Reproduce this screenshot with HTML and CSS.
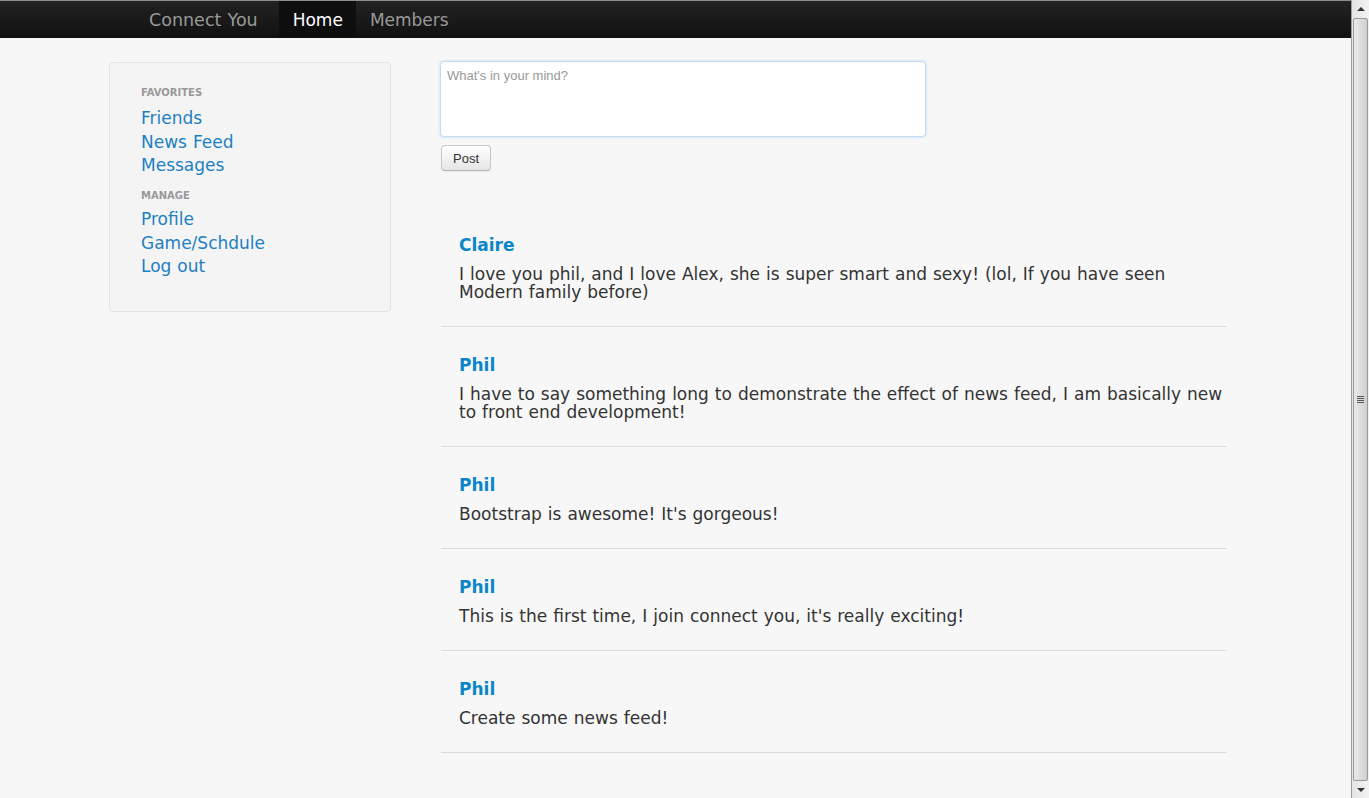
FILE: index.html
```html
<!DOCTYPE html>
<html lang="en">
<head>
<meta charset="utf-8">
<title>Connect You</title>
<link rel="stylesheet" href="styles.css">
</head>
<body>
<div class="window">
  <div class="viewport">
    <nav class="navbar">
      <a class="brand" href="#">Connect You</a>
      <a class="nav-item active" href="#">Home</a>
      <a class="nav-item" href="#">Members</a>
    </nav>
    <div class="container">
      <aside class="sidebar">
        <div class="nav-header">Favorites</div>
        <a class="side-link" href="#">Friends</a>
        <a class="side-link" href="#">News Feed</a>
        <a class="side-link" href="#">Messages</a>
        <div class="nav-header second">Manage</div>
        <a class="side-link" href="#">Profile</a>
        <a class="side-link" href="#">Game/Schdule</a>
        <a class="side-link" href="#">Log out</a>
      </aside>
      <main class="content">
        <textarea class="composer" placeholder="What's in your mind?"></textarea>
        <button class="btn">Post</button>
        <div class="feed">
          <div class="post">
            <div class="name">Claire</div>
            <p class="text">I love you phil, and I love Alex, she is super smart and sexy! (lol, If you have seen Modern family before)</p>
          </div>
          <div class="post">
            <div class="name">Phil</div>
            <p class="text">I have to say something long to demonstrate the effect of news feed, I am basically new to front end development!</p>
          </div>
          <div class="post">
            <div class="name">Phil</div>
            <p class="text">Bootstrap is awesome! It's gorgeous!</p>
          </div>
          <div class="post">
            <div class="name">Phil</div>
            <p class="text">This is the first time, I join connect you, it's really exciting!</p>
          </div>
          <div class="post">
            <div class="name">Phil</div>
            <p class="text">Create some news feed!</p>
          </div>
        </div>
      </main>
    </div>
  </div>
  <div class="scrollbar">
    <div class="sb-arrow up"></div>
    <div class="sb-track">
      <div class="sb-thumb"><div class="grip"></div></div>
    </div>
    <div class="sb-arrow down"></div>
  </div>
</div>
</body>
</html>
```
FILE: styles.css
```css
html, body {
  margin: 0;
  padding: 0;
  height: 100%;
  overflow: hidden;
}
body {
  background: #f7f7f7;
  font-family: "DejaVu Sans", Verdana, sans-serif;
  color: #333;
}
a { text-decoration: none; }

.window {
  display: flex;
  height: 798px;
}
.viewport {
  flex: 1;
  min-width: 0;
  overflow: hidden;
  background: #f7f7f7;
}

/* navbar */
.navbar {
  display: flex;
  height: 37px;
  border-top: 1px solid #8e8e8e;
  background: linear-gradient(to bottom, #222 0%, #111 100%);
  padding-left: 149px;
}
.brand {
  font-size: 17.5px;
  line-height: 35px;
  padding-top: 2px;
  color: #999;
  margin-right: 21px;
  word-spacing: 0.6px;
}
.nav-item {
  font-size: 17px;
  line-height: 35px;
  padding: 2px 13px 0 14px;
  color: #999;
}
.nav-item.active {
  color: #fff;
  background: #0e0e0e;
}

/* layout */
.container {
  display: flex;
  align-items: flex-start;
  padding: 23px 0 0 109px;
}

/* sidebar */
.sidebar {
  box-sizing: border-box;
  width: 282px;
  height: 250px;
  margin-top: 1px;
  background: #f4f4f4;
  border: 1px solid #e3e3e3;
  border-radius: 4px;
  padding: 20px 0 0 31px;
  display: flex;
  flex-direction: column;
  align-items: flex-start;
}
.nav-header {
  font-size: 10px;
  font-weight: bold;
  line-height: 20px;
  text-transform: uppercase;
  color: #999;
  margin-bottom: 4px;
}
.nav-header.second {
  margin-top: 8.5px;
  margin-bottom: 2px;
}
.side-link {
  font-size: 17px;
  line-height: 23.5px;
  color: #1e80c2;
  word-spacing: 0.6px;
}

/* content */
.content {
  margin-left: 49px;
  display: flex;
  flex-direction: column;
  align-items: flex-start;
}
.composer {
  box-sizing: border-box;
  width: 486px;
  height: 76px;
  margin: 0;
  padding: 6px;
  resize: none;
  font-family: "Liberation Sans", Arial, sans-serif;
  font-size: 13px;
  line-height: 16px;
  color: #555;
  background: #fff;
  border: 1px solid #c4dcf1;
  border-radius: 4px;
  box-shadow: 0 0 3px rgba(82, 168, 236, 0.35);
  outline: none;
}
.composer::placeholder { color: #999; }
.btn {
  box-sizing: border-box;
  margin: 8px 0 0 1px;
  width: 50px;
  height: 26px;
  padding: 0;
  font-family: "Liberation Sans", Arial, sans-serif;
  font-size: 13px;
  color: #333;
  background: linear-gradient(to bottom, #ffffff, #e6e6e6);
  border: 1px solid #c8c8c8;
  border-bottom-color: #b3b3b3;
  border-radius: 4px;
  box-shadow: inset 0 1px 0 rgba(255,255,255,.2), 0 1px 2px rgba(0,0,0,.05);
}

.feed {
  width: 786px;
  margin: 36px 0 0 1px;
}
.post {
  padding: 28px 2px 25px 18px;
  border-bottom: 1px solid #dcdcdc;
}
.name {
  font-size: 17px;
  font-weight: bold;
  line-height: 20px;
  color: #0a86c8;
}
.text {
  margin: 10px 0 0;
  font-size: 17px;
  line-height: 18px;
  word-spacing: 0.6px;
  color: #333;
}

/* scrollbar */
.scrollbar {
  width: 17px;
  border-left: 1px solid #9d9d9d;
  background: linear-gradient(to right, #e4e4e4, #f3f3f3);
  display: flex;
  flex-direction: column;
}
.sb-arrow {
  height: 17px;
  display: flex;
  align-items: center;
  justify-content: center;
}
.sb-arrow::before {
  content: "";
  width: 0;
  height: 0;
  border-left: 4px solid transparent;
  border-right: 4px solid transparent;
}
.sb-arrow.up::before { border-bottom: 4px solid #333; }
.sb-arrow.down::before { border-top: 4px solid #333; }
.sb-track {
  flex: 1;
  display: flex;
  padding: 1px 0 0;
}
.sb-thumb {
  flex: 1;
  margin: 0 1px;
  box-sizing: border-box;
  border: 1px solid #9a9a9a;
  border-radius: 2px;
  background: linear-gradient(to right, #e9e9e9, #dadada 60%, #cfcfcf);
  display: flex;
  align-items: center;
  justify-content: center;
}
.grip {
  width: 7px;
  height: 7px;
  background: repeating-linear-gradient(to bottom, #555 0 1px, transparent 1px 2px);
}
```
